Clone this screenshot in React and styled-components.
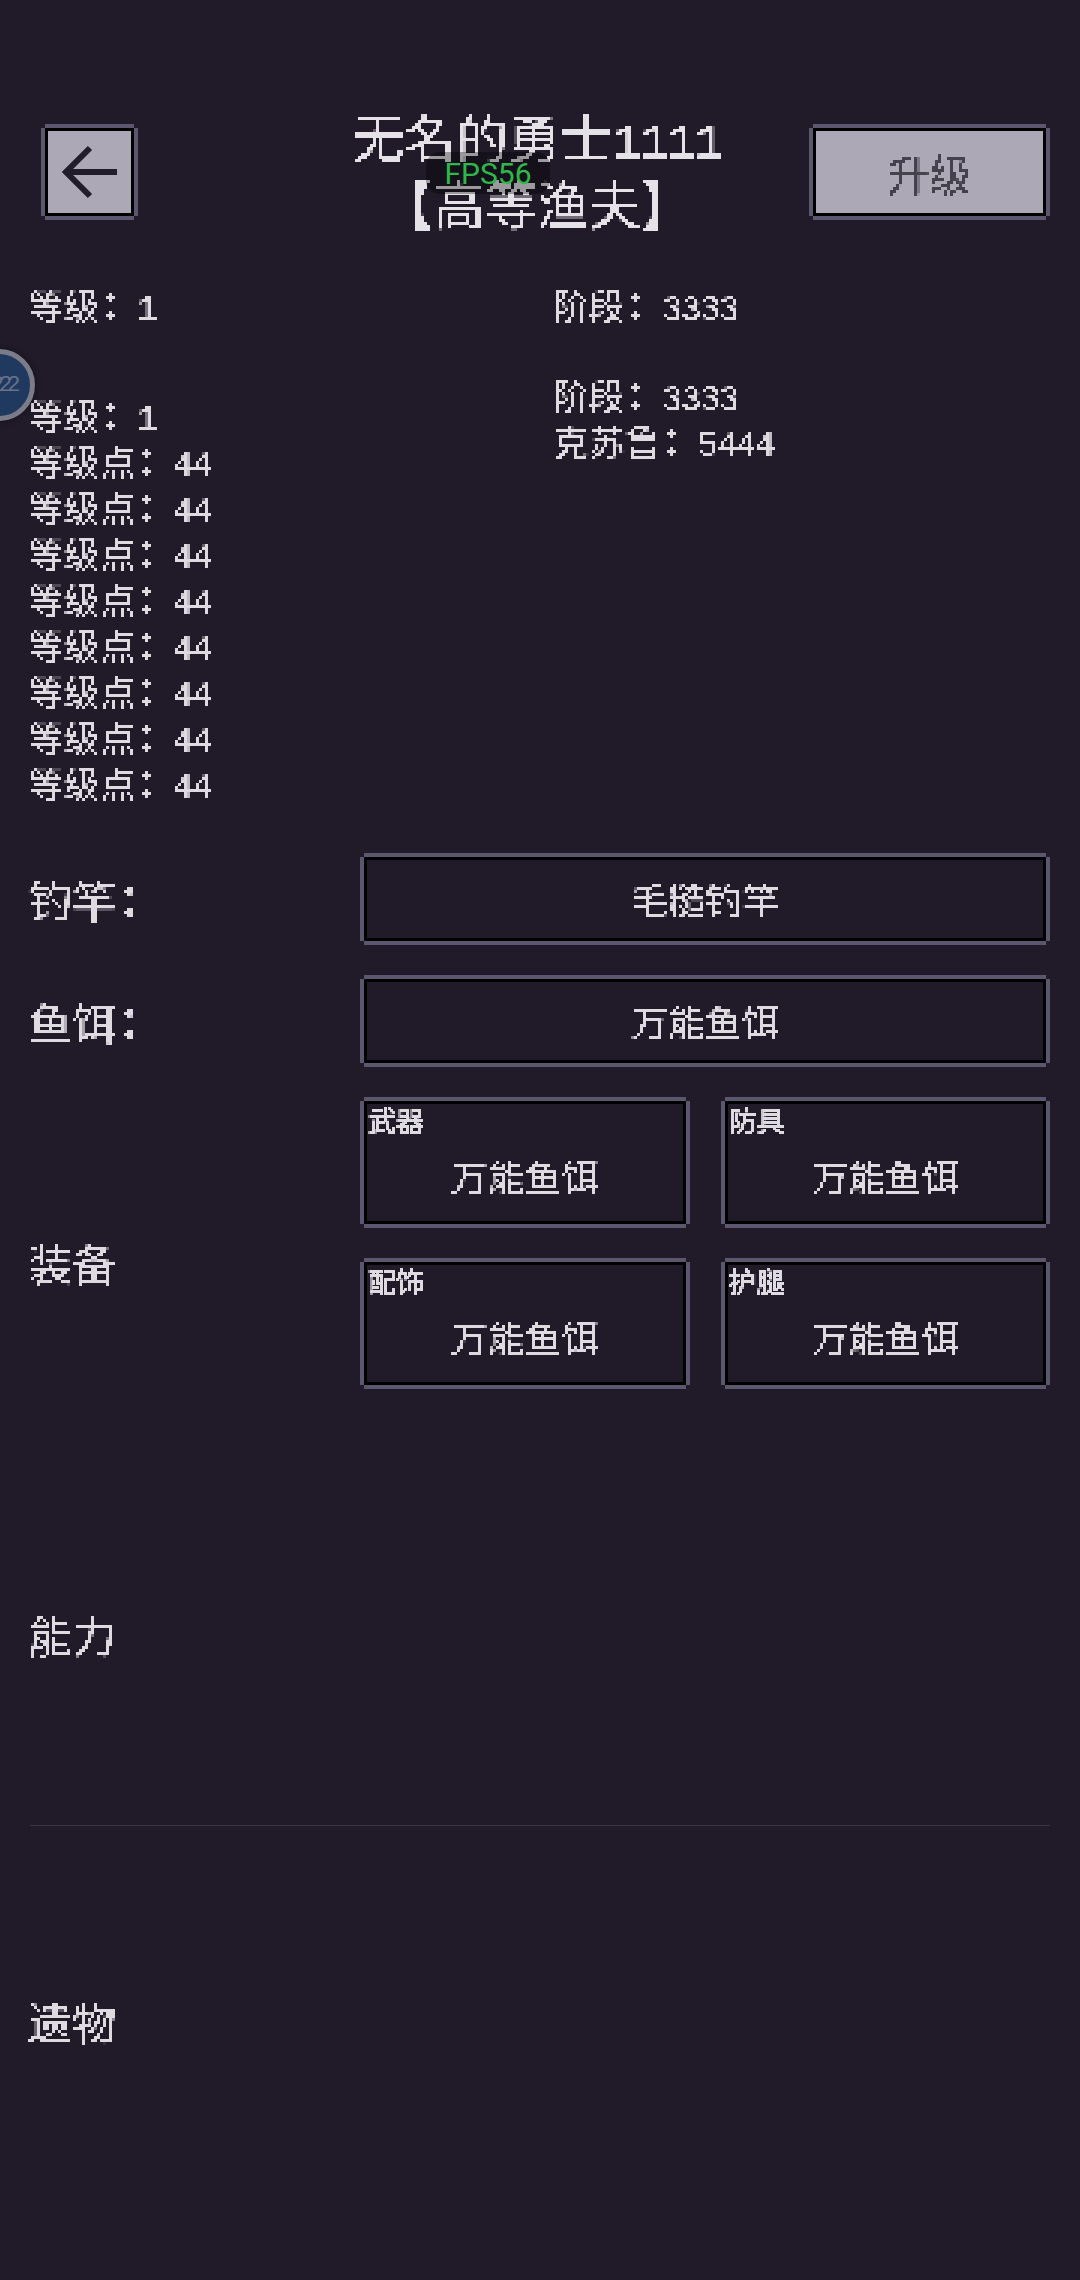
import React from 'react'
import styled, { createGlobalStyle, css } from 'styled-components';

const GlobalStyle = createGlobalStyle`
  html, body {
    margin: 0;
    padding: 0;
    background: #201a29;
  }
  * {
    box-sizing: border-box;
  }
`;

const pixelBorder = css`
  margin: 4px;
  border: 3px solid #000;
  box-shadow: 0 -4px 0 #5b576f, 0 4px 0 #5b576f, -4px 0 0 #5b576f, 4px 0 0 #5b576f;
`;

const Page = styled.div`
  position: relative;
  width: 1080px;
  height: 2280px;
  overflow: hidden;
  padding: 124px 30px 0 28px;
  background: #201a29;
  color: #dedbe0;
  font-family: "Noto Sans CJK TC", "Noto Sans CJK SC", sans-serif;
`;

const FilterDefs = styled.svg`
  position: absolute;
  width: 0;
  height: 0;
`;

const Header = styled.div`
  display: grid;
  grid-template-columns: 1fr 1fr 1fr;
  grid-template-rows: 96px;
  align-items: center;
`;

const BackButton = styled.div`
  ${pixelBorder}
  justify-self: start;
  margin-left: 17px;
  width: 89px;
  height: 88px;
  display: flex;
  align-items: center;
  justify-content: center;
  background: #aca8b6;
`;

const Title = styled.div`
  justify-self: center;
  white-space: nowrap;
  text-align: center;
  margin: 0 4px 6px 0;
  font-size: 52px;
  line-height: 67px;
  color: #e4e2e6;
  filter: url(#px3b);
`;

const UpgradeButton = styled.div`
  ${pixelBorder}
  justify-self: end;
  width: 233px;
  height: 88px;
  display: flex;
  align-items: center;
  justify-content: center;
  background: #aca8b6;
  color: #45414d;
  font-size: 42px;
`;

const Stats = styled.div`
  display: grid;
  grid-template-columns: 525px 1fr;
  margin-top: 61px;
`;

const StatLine = styled.div`
  margin-top: ${({ $top }) => $top || 0}px;
  font-size: 36px;
  line-height: 46px;
  white-space: nowrap;
  filter: url(#px3);
`;

const Num = styled.span`
  font-family: "Liberation Mono", monospace;
  font-size: 0.95em;
  letter-spacing: -0.045em;
  line-height: 0;
`;

const Colon = styled.span`
  display: inline-block;
  width: 1.02em;
  text-indent: -0.2em;
  font-weight: 700;
  line-height: 0;
`;

const Form = styled.div`
  display: flex;
  flex-direction: column;
  gap: 30px;
  margin-top: 48px;
`;

const FormRow = styled.div`
  display: grid;
  grid-template-columns: 332px 1fr;
  align-items: center;
`;

const FieldLabel = styled.div`
  font-size: 44px;
  line-height: 60px;
  margin-top: ${({ $top }) => $top || 0}px;
  filter: url(#px3b);
`;

const SelectBox = styled.div`
  ${pixelBorder}
  position: relative;
  height: ${({ $tall }) => ($tall ? 123 : 84)}px;
  padding-top: ${({ $tall }) => ($tall ? 26 : 0)}px;
  display: flex;
  align-items: center;
  justify-content: center;
  font-size: 37px;
  color: #dedbe0;
`;

const BoxText = styled.span`
  filter: url(#px3);
`;

const SlotGrid = styled.div`
  display: grid;
  grid-template-columns: 1fr 1fr;
  column-gap: 31px;
  row-gap: 30px;
`;

const SlotTag = styled.span`
  position: absolute;
  top: 1px;
  left: 1px;
  font-size: 28px;
  line-height: 30px;
  filter: url(#px2);
`;

const Section = styled.div`
  margin-top: ${({ $top }) => $top}px;
  font-size: 44px;
  line-height: 60px;
  filter: url(#px3b);
`;

const Divider = styled.div`
  margin-top: 161px;
  height: 1px;
  background: #3a3644;
  margin-left: 2px;
`;

const FpsBadge = styled.div`
  position: absolute;
  top: 152px;
  left: 426px;
  width: 124px;
  height: 42px;
  display: flex;
  align-items: center;
  justify-content: center;
  border-radius: 14px;
  background: rgba(0, 0, 0, 0.32);
  color: #2fb84a;
  font-family: Roboto, sans-serif;
  font-size: 30px;
`;

const FloatBall = styled.div`
  position: absolute;
  top: 349px;
  left: -37px;
  width: 72px;
  height: 72px;
  display: flex;
  align-items: center;
  justify-content: center;
  border-radius: 50%;
  border: 5px solid #7b7b89;
  background: #1f3a5e;
  box-shadow: 0 0 6px rgba(0, 0, 0, 0.4);
  color: #66718a;
  font-family: "Liberation Mono", monospace;
  font-size: 22px;
  letter-spacing: -5px;
`;

const levelPoints = Array.from({ length: 8 });
const slots = ['武器', '防具', '配饰', '护腿'];

// blocky bitmap-font look for the game's text
const PixelFilter = ({ id, size, radius, soft, cut }) => (
  <filter id={id} x="-5%" y="-10%" width="110%" height="120%" colorInterpolationFilters="sRGB">
    <feGaussianBlur in="SourceGraphic" stdDeviation={soft} result="soft" />
    <feFlood x="1" y="1" width="1" height="1" floodColor="#000" />
    <feComposite width={size} height={size} />
    <feTile result="grid" />
    <feComposite in="soft" in2="grid" operator="in" />
    <feMorphology operator="dilate" radius={radius} />
    <feComponentTransfer>
      <feFuncA type="linear" slope="4" intercept={cut} />
    </feComponentTransfer>
  </filter>
);

const BackArrow = () => (
  <svg width="60" height="60" viewBox="0 0 60 60" fill="none" stroke="#221d2b" strokeWidth="6">
    <path d="M57 30H6M30 6L6 30L30 54" />
  </svg>
);

const Sep = () => <Colon>{'\uFF1A'}</Colon>;

const App = () => {
  return (
    <Page>
      <GlobalStyle />
      <FilterDefs>
        <PixelFilter id="px2" size={2} radius={1} soft={0.3} cut={-1.6} />
        <PixelFilter id="px3" size={3} radius={1} soft={0.7} cut={-0.9} />
        <PixelFilter id="px3b" size={3} radius={1} soft={0.75} cut={-0.85} />
      </FilterDefs>
      <Header>
        <BackButton>
          <BackArrow />
        </BackButton>
        <Title>
          无名的勇士<Num>1111</Num>
          <br />
          【高等渔夫】
        </Title>
        <UpgradeButton><BoxText>升级</BoxText></UpgradeButton>
      </Header>

      <Stats>
        <div>
          <StatLine>等级<Sep /><Num>1</Num></StatLine>
          <StatLine $top={64}>等级<Sep /><Num>1</Num></StatLine>
          {levelPoints.map((_, i) => (
            <StatLine key={i}>等级点<Sep /><Num>44</Num></StatLine>
          ))}
        </div>
        <div>
          <StatLine>阶段<Sep /><Num>3333</Num></StatLine>
          <StatLine $top={44}>阶段<Sep /><Num>3333</Num></StatLine>
          <StatLine>克苏鲁<Sep /><Num>5444</Num></StatLine>
        </div>
      </Stats>

      <Form>
        <FormRow>
          <FieldLabel>钓竿<Sep /></FieldLabel>
          <SelectBox><BoxText>毛糙钓竿</BoxText></SelectBox>
        </FormRow>
        <FormRow>
          <FieldLabel>鱼饵<Sep /></FieldLabel>
          <SelectBox><BoxText>万能鱼饵</BoxText></SelectBox>
        </FormRow>
        <FormRow>
          <FieldLabel $top={38}>装备</FieldLabel>
          <SlotGrid>
            {slots.map((name) => (
              <SelectBox $tall key={name}>
                <SlotTag>{name}</SlotTag>
                <BoxText>万能鱼饵</BoxText>
              </SelectBox>
            ))}
          </SlotGrid>
        </FormRow>
      </Form>

      <Section $top={215}>能力</Section>
      <Divider />
      <Section $top={165}>遗物</Section>

      <FpsBadge>FPS56</FpsBadge>
      <FloatBall>2222</FloatBall>
    </Page>
  );
};

export default App
